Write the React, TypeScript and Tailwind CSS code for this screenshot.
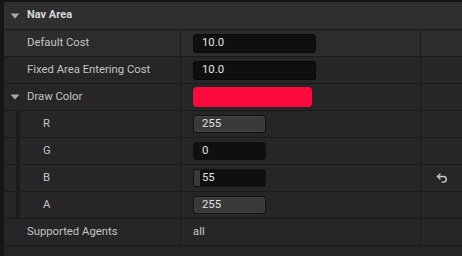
import React from "react";

const Tri = () => (
  <svg width="10" height="6" viewBox="0 0 10 6" className="shrink-0">
    <path d="M0.5 0.5 L9.5 0.5 L5 5.5 Z" fill="#a8a8a8" />
  </svg>
);

const Undo = () => (
  <svg width="12" height="10" viewBox="0 0 12 10" fill="none" stroke="#c8c8c8" strokeWidth="1.4" strokeLinecap="round" strokeLinejoin="round">
    <path d="M4 1 L1.5 3.5 L4 6" />
    <path d="M1.5 3.5 H7.5 A2.8 2.8 0 0 1 7.5 9.1 H6" />
  </svg>
);

type RowProps = {
  label: React.ReactNode;
  value?: React.ReactNode;
  right?: React.ReactNode;
  nested?: boolean;
  hover?: boolean;
  expander?: boolean;
};

function Row({ label, value, right, nested, hover, expander }: RowProps) {
  const bg = hover ? "bg-[#2c2c2c]" : "bg-[#262626]";
  return (
    <div className="flex h-[27px]">
      <div className="w-[4px] shrink-0 bg-[#151515]" />
      <div className={`flex flex-1 border-b border-[#1b1b1b] ${bg}`}>
        <div className="flex w-[177px] shrink-0 border-r border-[#1b1b1b]">
          {nested ? (
            <>
              <div className="w-[12px] shrink-0" />
              <div className="w-[4px] shrink-0 bg-[#1c1c1c]" />
              <div className="flex items-center pl-[23px] text-[#c4c4c4]">{label}</div>
            </>
          ) : (
            <div className="flex items-center pl-[6px] text-[#c4c4c4]">
              <div className="w-[17px] flex items-center justify-start">{expander ? <Tri /> : null}</div>
              {label}
            </div>
          )}
        </div>
        <div className="flex w-[240px] shrink-0 items-center border-r border-[#1b1b1b] pl-[12px]">{value}</div>
        <div className="flex flex-1 items-center justify-center">{right}</div>
      </div>
    </div>
  );
}

const BigBox = ({ v }: { v: string }) => (
  <div className="flex h-[19px] w-[123px] items-center rounded-[3px] border border-[#0a0a0a] bg-[#0f0f0f] pl-[8px] text-[#e2e2e2]">
    {v}
  </div>
);

const SmallBox = ({ v, frac }: { v: string; frac: number }) => (
  <div className="relative flex h-[18px] w-[73px] items-center overflow-hidden rounded-[3px] border border-[#111111] bg-[#0f0f0f] text-[#e2e2e2]">
    <div
      className="absolute left-0 top-0 h-full bg-[#393939]"
      style={{ width: `${frac * 100}%` }}
    />
    <div className="absolute inset-0 rounded-[3px] border border-[#4a4a4a] opacity-60" style={{ display: frac >= 1 ? "block" : "none" }} />
    <span className="relative pl-[8px]">{v}</span>
  </div>
);

export default function App() {
  return (
    <div
      className="flex h-[256px] w-[462px] flex-col overflow-hidden bg-[#262626] text-[11.3px]"
      style={{ fontFamily: "Roboto, 'Noto Sans', sans-serif" }}
    >
      <div className="h-[2px] shrink-0 bg-[#151515]" />
      <div className="flex h-[28px] shrink-0">
        <div className="w-[4px] shrink-0 bg-[#151515]" />
        <div className="flex flex-1 items-center border-b border-[#1b1b1b] bg-[#2f2f2f] pl-[6px]">
          <div className="w-[17px] flex items-center justify-start"><Tri /></div>
          <span className="font-bold text-[#d8d8d8] text-[11px]">Nav Area</span>
        </div>
      </div>
      <Row label="Default Cost" value={<BigBox v="10.0" />} hover />
      <Row label="Fixed Area Entering Cost" value={<BigBox v="10.0" />} />
      <Row
        label="Draw Color"
        expander
        value={<div className="h-[20px] w-[119px] rounded-[4px] bg-[#fb0a3e]" />}
      />
      <Row nested label="R" value={<SmallBox v="255" frac={1} />} />
      <Row nested label="G" value={<SmallBox v="0" frac={0} />} />
      <Row nested label="B" value={<SmallBox v="55" frac={0.09} />} right={<Undo />} />
      <Row nested label="A" value={<SmallBox v="255" frac={1} />} />
      <Row label="Supported Agents" value={<span className="text-[#c8c8c8]">all</span>} />
      <div className="flex flex-1">
        <div className="w-[4px] shrink-0 bg-[#151515]" />
        <div className="flex-1 bg-[#252525]" />
      </div>
    </div>
  );
}
